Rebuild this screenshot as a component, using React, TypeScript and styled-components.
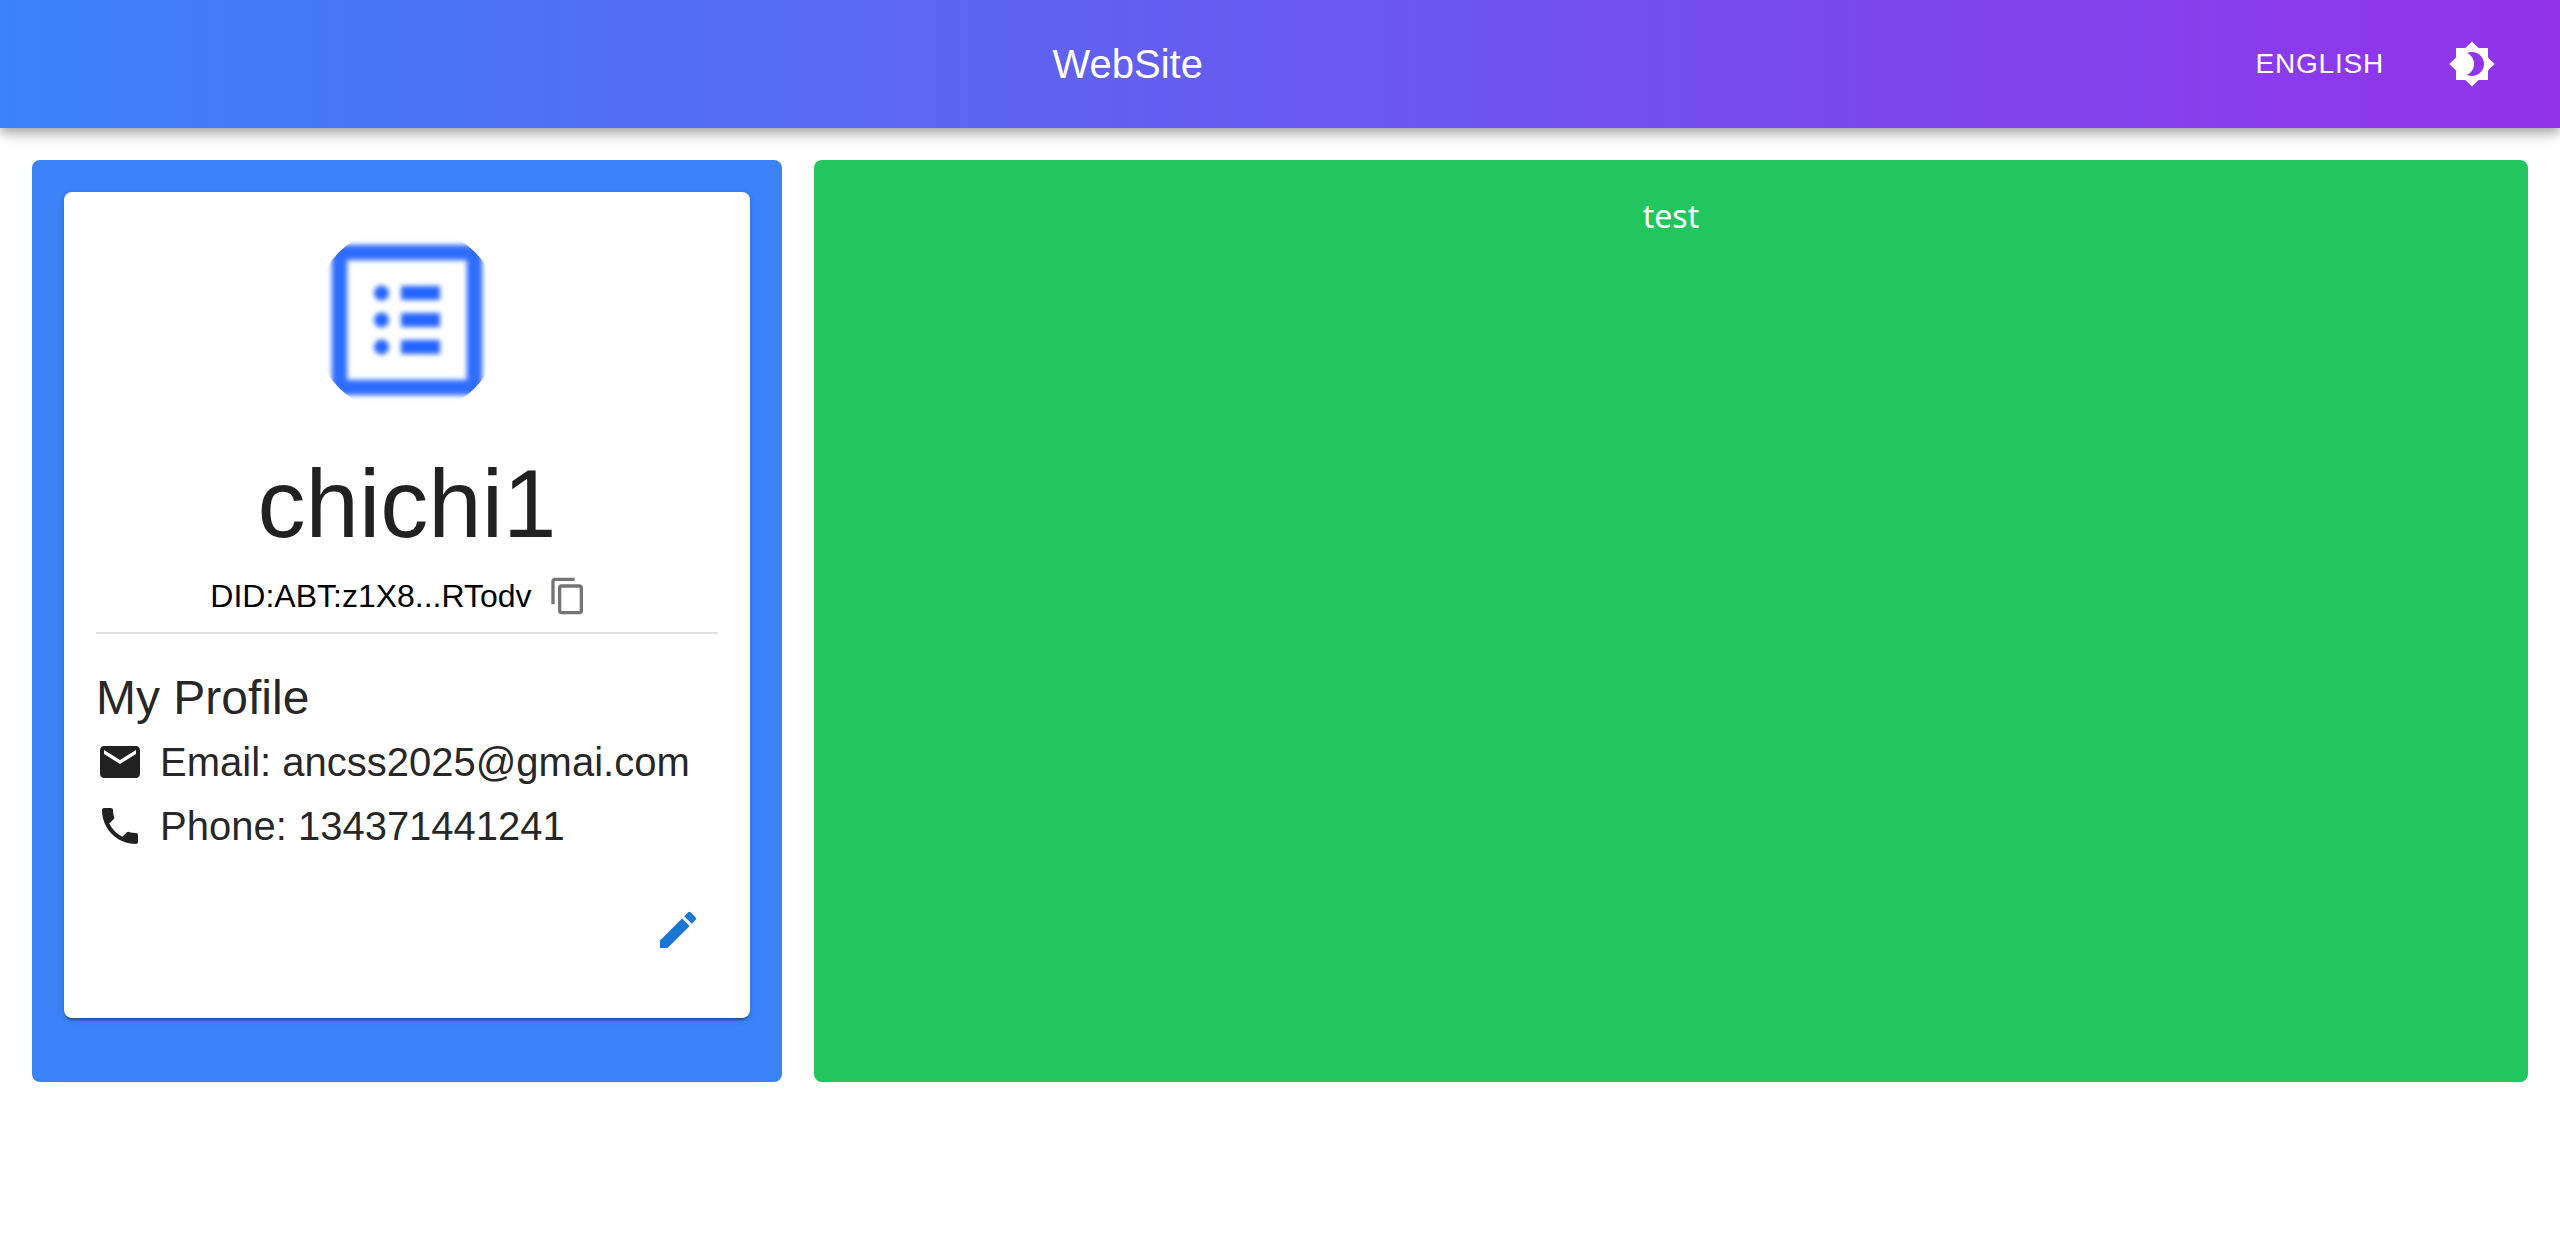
import React from "react";
import styled, { createGlobalStyle } from "styled-components";

const GlobalStyle = createGlobalStyle`
  *, *::before, *::after {
    box-sizing: border-box;
  }

  body {
    margin: 0;
    background: #fff;
    color: rgba(0, 0, 0, 0.87);
    font-family: "Liberation Sans", Arial, sans-serif;
  }
`;

const AppBar = styled.header`
  display: flex;
  align-items: center;
  gap: 32px;
  min-height: 128px;
  padding: 0 48px;
  color: #fff;
  background: linear-gradient(to right, #3b82f6, #9333ea);
  box-shadow:
    0 4px 8px -2px rgba(0, 0, 0, 0.2),
    0 8px 10px 0 rgba(0, 0, 0, 0.14),
    0 2px 20px 0 rgba(0, 0, 0, 0.12);
`;

const SiteTitle = styled.h1`
  flex: 1;
  margin: 0;
  font-size: 40px;
  font-weight: 400;
  line-height: 64px;
  text-align: center;
`;

const LanguageButton = styled.button`
  padding: 12px 16px;
  border: 0;
  border-radius: 8px;
  background: transparent;
  color: inherit;
  font-family: inherit;
  font-size: 28px;
  line-height: 48px;
  letter-spacing: 0.02857em;
  text-transform: uppercase;
  cursor: pointer;
`;

const IconButton = styled.button<{ $color?: string }>`
  display: inline-flex;
  padding: 16px;
  border: 0;
  border-radius: 50%;
  background: transparent;
  color: ${({ $color }) => $color ?? "inherit"};
  cursor: pointer;
`;

const Svg = styled.svg<{ $size?: number }>`
  display: block;
  flex: none;
  width: ${({ $size }) => $size ?? 48}px;
  height: ${({ $size }) => $size ?? 48}px;
  fill: currentColor;
`;

const Layout = styled.main`
  display: grid;
  grid-template-columns: minmax(0, 7fr) minmax(0, 16fr);
  gap: 32px;
  padding: 32px;
`;

const Panel = styled.section<{ $color: string }>`
  padding: 32px;
  border-radius: 8px;
  background: ${({ $color }) => $color};
`;

const Message = styled.p`
  margin: 0;
  color: #fff;
  font-family: "Noto Sans", sans-serif;
  font-size: 32px;
  line-height: 48px;
  text-align: center;
`;

const Card = styled.article`
  margin-bottom: 32px;
  padding: 32px 32px 48px;
  border-radius: 8px;
  background: #fff;
  box-shadow:
    0 4px 2px -2px rgba(0, 0, 0, 0.2),
    0 2px 2px 0 rgba(0, 0, 0, 0.14),
    0 2px 6px 0 rgba(0, 0, 0, 0.12);
`;

const Identity = styled.div`
  display: flex;
  flex-direction: column;
  align-items: center;
  border-bottom: 2px solid rgba(0, 0, 0, 0.12);
`;

const AvatarImage = styled.svg`
  display: block;
  width: 192px;
  height: 192px;
  border-radius: 50%;
`;

const UserName = styled.h2`
  margin: 32px 0 0;
  font-size: 96px;
  font-weight: 400;
  line-height: 112px;
`;

const DidRow = styled.div`
  display: flex;
  align-items: center;
  color: #000;
  font-size: 32px;
  line-height: 48px;
`;

const SectionTitle = styled.h3`
  margin: 32px 0 0;
  font-size: 48px;
  font-weight: 400;
  line-height: 64px;
`;

const ContactRow = styled.div`
  display: flex;
  align-items: center;
  gap: 16px;
  font-size: 40px;
  line-height: 64px;
`;

const Actions = styled.div`
  display: flex;
  justify-content: flex-end;
  margin-top: 32px;
`;

const paths = {
  theme:
    "M20 8.69V4h-4.69L12 .69 8.69 4H4v4.69L.69 12 4 15.31V20h4.69L12 23.31 15.31 20H20v-4.69L23.31 12 20 8.69zM12 18c-.89 0-1.74-.2-2.5-.55C11.56 16.5 13 14.42 13 12s-1.44-4.5-3.5-5.45C10.26 6.2 11.11 6 12 6c3.31 0 6 2.69 6 6s-2.69 6-6 6z",
  copy: "M16 1H4c-1.1 0-2 .9-2 2v14h2V3h12V1zm3 4H8c-1.1 0-2 .9-2 2v14c0 1.1.9 2 2 2h11c1.1 0 2-.9 2-2V7c0-1.1-.9-2-2-2zm0 16H8V7h11v14z",
  mail: "M20 4H4c-1.1 0-1.99.9-1.99 2L2 18c0 1.1.9 2 2 2h16c1.1 0 2-.9 2-2V6c0-1.1-.9-2-2-2zm0 4l-8 5-8-5V6l8 5 8-5v2z",
  phone:
    "M6.62 10.79c1.44 2.83 3.76 5.14 6.59 6.59l2.2-2.2c.27-.27.67-.36 1.02-.24 1.12.37 2.33.57 3.57.57.55 0 1 .45 1 1V20c0 .55-.45 1-1 1-9.39 0-17-7.61-17-17 0-.55.45-1 1-1h3.5c.55 0 1 .45 1 1 0 1.25.2 2.45.57 3.57.11.35.03.74-.25 1.02l-2.2 2.2z",
  edit: "M3 17.25V21h3.75L17.81 9.94l-3.75-3.75L3 17.25zM20.71 7.04c.39-.39.39-1.02 0-1.41l-2.34-2.34a.9959.9959 0 0 0-1.41 0l-1.83 1.83 3.75 3.75 1.83-1.83z",
};

function Icon({ name, size }: { name: keyof typeof paths; size?: number }) {
  return (
    <Svg viewBox="0 0 24 24" $size={size} aria-hidden="true">
      <path d={paths[name]} />
    </Svg>
  );
}

function Avatar() {
  return (
    <AvatarImage viewBox="0 0 192 192" role="img" aria-label="chichi1">
      <defs>
        <filter
          id="avatar-soft"
          x="0"
          y="0"
          width="192"
          height="192"
          filterUnits="userSpaceOnUse"
          colorInterpolationFilters="sRGB"
        >
          <feGaussianBlur stdDeviation="2.8" />
        </filter>
      </defs>
      <g filter="url(#avatar-soft)" fill="#2464ff">
        <rect x="28.5" y="28.5" width="135" height="135" fill="none" stroke="#2f6dff" strokeWidth="15.5" />
        {[69, 96, 123].map((y) => (
          <React.Fragment key={y}>
            <circle cx="70.5" cy={y} r="7.5" />
            <rect x="90" y={y - 7} width="39" height="14" rx="1" />
          </React.Fragment>
        ))}
      </g>
    </AvatarImage>
  );
}

export default function App() {
  return (
    <>
      <GlobalStyle />
      <AppBar>
        <SiteTitle>WebSite</SiteTitle>
        <LanguageButton type="button">English</LanguageButton>
        <IconButton type="button" aria-label="Toggle theme">
          <Icon name="theme" />
        </IconButton>
      </AppBar>
      <Layout>
        <Panel $color="#3b82f6">
          <Card>
            <Identity>
              <Avatar />
              <UserName>chichi1</UserName>
              <DidRow>
                <span>DID:ABT:z1X8...RTodv</span>
                <IconButton type="button" aria-label="Copy DID" $color="rgba(0, 0, 0, 0.54)">
                  <Icon name="copy" size={40} />
                </IconButton>
              </DidRow>
            </Identity>
            <SectionTitle>My Profile</SectionTitle>
            <ContactRow>
              <Icon name="mail" />
              <span>Email: ancss2025@gmai.com</span>
            </ContactRow>
            <ContactRow>
              <Icon name="phone" />
              <span>Phone: 134371441241</span>
            </ContactRow>
            <Actions>
              <IconButton type="button" aria-label="Edit profile" $color="#1976d2">
                <Icon name="edit" />
              </IconButton>
            </Actions>
          </Card>
        </Panel>
        <Panel $color="#22c55e">
          <Message>test</Message>
        </Panel>
      </Layout>
    </>
  );
}
